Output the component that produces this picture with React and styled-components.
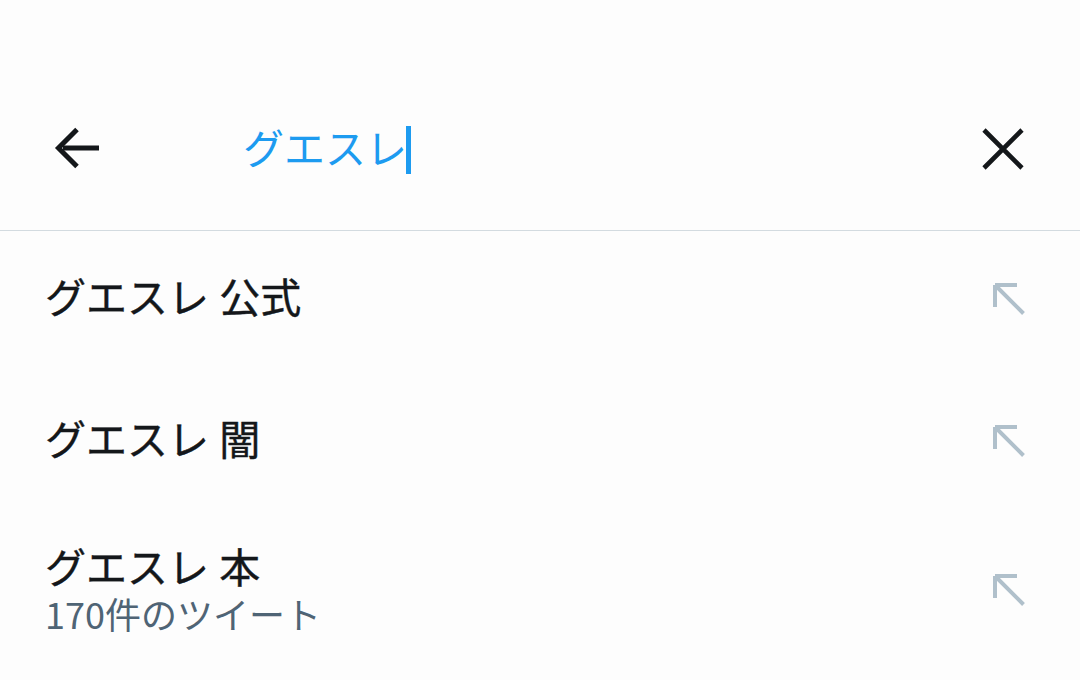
import styled, { createGlobalStyle } from "styled-components"

const suggestions = [
  { term: "グエスレ 公式" },
  { term: "グエスレ 闇" },
  { term: "グエスレ 本", count: "170件のツイート" },
]

export default function App() {
  return (
    <>
      <GlobalStyle />
      <Page>
        <SearchBar>
          <IconButton aria-label="back">
            <svg width="48" height="48" viewBox="0 0 48 48">
              <path d="M46 22H10" stroke="#14171a" strokeWidth="5" fill="none" />
              <path d="M24 3.5L5.5 22L24 40.5" stroke="#14171a" strokeWidth="5" fill="none" />
            </svg>
          </IconButton>
          <Query>
            グエスレ<Caret />
          </Query>
          <IconButton aria-label="clear">
            <svg width="44" height="44" viewBox="0 0 44 44">
              <path d="M3 2L41 40M41 2L3 40" stroke="#14171a" strokeWidth="4.6" fill="none" />
            </svg>
          </IconButton>
        </SearchBar>
        <List>
          {suggestions.map((s, i) => (
            <Row key={i} tall={!!s.count}>
              <Texts>
                <Term>{s.term}</Term>
                {s.count && <Count>{s.count}</Count>}
              </Texts>
              <svg width="36" height="36" viewBox="0 0 36 36">
                <path d="M4 4H26M4 4V26M4 4L32.5 32.5" stroke="#b0c0cb" strokeWidth="4" fill="none" />
              </svg>
            </Row>
          ))}
        </List>
      </Page>
    </>
  )
}

const GlobalStyle = createGlobalStyle`
  html, body {
    margin: 0;
    background: #fdfdfd;
  }
  body {
    font-family: Roboto, "Noto Sans CJK JP", sans-serif;
  }
`
const Page = styled.div`
  width: 1080px;
  height: 680px;
  overflow: hidden;
  background: #fdfdfd;
`
const SearchBar = styled.header`
  margin-top: 70px;
  height: 160px;
  border-bottom: 1px solid #d3dbe0;
  display: flex;
  align-items: center;
  padding: 0 55px 0 53px;
  box-sizing: content-box;
`
const IconButton = styled.button`
  border: 0;
  padding: 0;
  background: transparent;
  display: flex;
  align-items: center;
  justify-content: center;
`
const Query = styled.div`
  flex: 1;
  padding-left: 142px;
  display: flex;
  align-items: center;
  font-size: 41px;
  color: #1d9bf0;
  line-height: 1;
`
const Caret = styled.span`
  width: 5px;
  height: 48px;
  background: #1d9bf0;
  margin-left: -1px;
`
const List = styled.ul`
  list-style: none;
  margin: 0;
  padding: 0;
`
const Row = styled.li`
  height: ${(p) => (p.tall ? "160px" : "142px")};
  display: flex;
  align-items: center;
  justify-content: space-between;
  padding: 0 53px ${(p) => (p.tall ? "10px" : "6px")} 45px;
  box-sizing: border-box;
`
const Texts = styled.div`
  display: flex;
  flex-direction: column;
`
const Term = styled.div`
  font-size: 41px;
  line-height: 47px;
  color: #14171a;
  -webkit-text-stroke: 0.4px #14171a;
`
const Count = styled.div`
  font-size: 36px;
  line-height: 41px;
  color: #4f6475;
  font-family: "Noto Sans CJK JP", sans-serif;
`
